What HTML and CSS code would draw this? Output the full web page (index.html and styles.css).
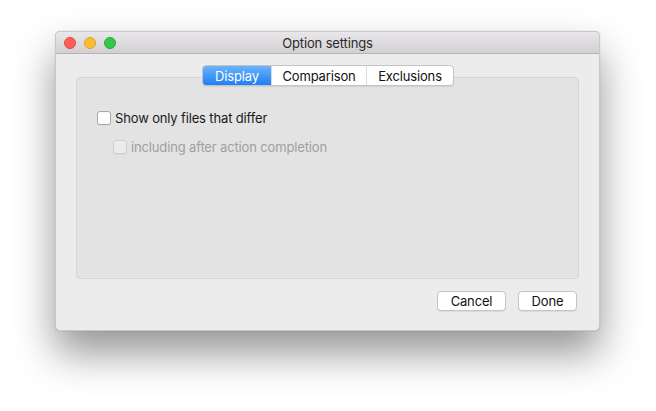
FILE: index.html
```html
<!DOCTYPE html>
<html>
<head>
<meta charset="utf-8">
<link rel="stylesheet" href="styles.css">
</head>
<body>
<div class="window">
  <div class="titlebar">
    <div class="lights">
      <span class="light red"></span>
      <span class="light yellow"></span>
      <span class="light green"></span>
    </div>
    <div class="title">Option settings</div>
  </div>
  <div class="content">
    <div class="tabview">
      <div class="segmented">
        <div class="seg active">Display</div>
        <div class="seg">Comparison</div>
        <div class="seg">Exclusions</div>
      </div>
      <div class="panel">
        <label class="check">
          <span class="box"></span>
          <span class="label">Show only files that differ</span>
        </label>
        <label class="check sub disabled">
          <span class="box"></span>
          <span class="label">including after action completion</span>
        </label>
      </div>
    </div>
    <div class="buttons">
      <button class="btn cancel">Cancel</button>
      <button class="btn done">Done</button>
    </div>
  </div>
</div>
</body>
</html>
```
FILE: styles.css
```css
html, body {
  margin: 0;
  padding: 0;
  background: #ffffff;
  width: 656px;
  height: 411px;
  overflow: hidden;
  font-family: "Inter", "Liberation Sans", Arial, sans-serif;
  font-size: 13px;
  letter-spacing: -0.15px;
  color: #1a1a1a;
}

.window {
  margin: 31px 0 0 55px;
  width: 545px;
  height: 300px;
  background: #ececec;
  border-radius: 5px;
  box-sizing: border-box;
  border: 1px solid #c8c8c8;
  box-shadow: 0 22px 40px rgba(0, 0, 0, 0.42), 0 0 1px rgba(0,0,0,0.3);
  overflow: hidden;
}

.titlebar {
  position: relative;
  height: 21px;
  background: linear-gradient(#e9e7e9, #d2d0d2);
  border-bottom: 1px solid #b5b3b5;
  display: flex;
  align-items: center;
  justify-content: center;
}

.lights {
  position: absolute;
  left: 8px;
  top: 5px;
  display: flex;
  gap: 8px;
}

.light {
  width: 12px;
  height: 12px;
  border-radius: 50%;
  box-sizing: border-box;
}
.red { background: #fc5f57; border: 1px solid #df4744; }
.yellow { background: #fdbc2e; border: 1px solid #de9f34; }
.green { background: #33c748; border: 1px solid #27aa35; }

.title {
  font-size: 13px;
  color: #2a2a2a;
}

.content {
  padding: 0 20px 0 20px;
}

.tabview {
  position: relative;
  padding-top: 23px;
}

.segmented {
  position: absolute;
  top: 11px;
  left: 126px;
  display: flex;
  height: 21px;
  box-sizing: border-box;
  border: 1px solid #c4c4c4;
  border-radius: 4px;
  background: #ffffff;
  box-shadow: 0 1px 1px rgba(0,0,0,0.08);
  overflow: hidden;
  z-index: 1;
}

.seg {
  display: flex;
  align-items: center;
  justify-content: center;
  height: 19px;
  color: #111;
  border-left: 1px solid #dcdcdc;
}
.seg:first-child { border-left: none; }
.seg:nth-child(1) { width: 68px; }
.seg:nth-child(2) { width: 94px; }
.seg:nth-child(3) { width: 86px; }

.seg.active {
  background: linear-gradient(#6cb3fa, #1e7ff7);
  color: #ffffff;
}

.panel {
  height: 202px;
  box-sizing: border-box;
  background: #e3e3e3;
  border: 1px solid #d6d6d6;
  border-radius: 4px;
  padding: 32px 0 0 20px;
}

.check {
  display: flex;
  align-items: center;
  height: 16px;
}

.check .box {
  width: 14px;
  height: 14px;
  box-sizing: border-box;
  background: #ffffff;
  border: 1px solid #a9a9a9;
  border-radius: 3px;
  margin-right: 4px;
  box-shadow: 0 1px 0 rgba(0,0,0,0.04);
}

.check.sub {
  margin-top: 13px;
  margin-left: 16px;
}

.check.disabled .box {
  background: #ececec;
  border-color: #cdcdcd;
}
.check.disabled .label {
  color: #9f9f9f;
}

.buttons {
  display: flex;
  justify-content: flex-end;
  gap: 12px;
  padding: 12px 2px 0 0;
}

.btn {
  font-family: "Inter", "Liberation Sans", Arial, sans-serif;
  font-size: 13px;
  letter-spacing: -0.15px;
  height: 20px;
  padding: 0;
  background: #ffffff;
  border: 1px solid #c5c5c5;
  border-radius: 4px;
  box-shadow: 0 1px 1px rgba(0,0,0,0.08);
  color: #111;
}
.cancel { width: 69px; }
.done { width: 59px; }
```
